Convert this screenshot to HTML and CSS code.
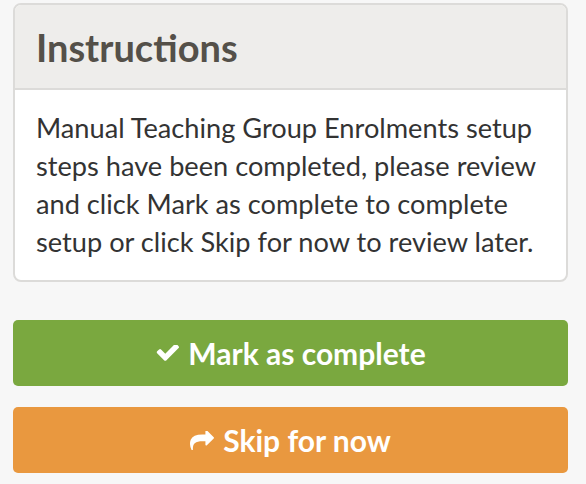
FILE: index.html
```html
<!DOCTYPE html>
<html>
<head>
<meta charset="utf-8">
<link rel="stylesheet" href="styles.css">
</head>
<body>
<div class="page">
  <div class="card">
    <div class="card-header"><h2 class="title">Instructions</h2></div>
    <div class="card-body">
      <p class="text">Manual Teaching Group Enrolments setup steps have been completed, please review and click Mark as complete to complete setup or click Skip for now to review later.</p>
    </div>
  </div>
  <div class="actions">
    <button class="btn btn-green">
      <svg class="icon icon-check" viewBox="0 420 1671 1110"><path fill="#fff" d="M1671 566q0 40-28 68l-724 724-136 136q-28 28-68 28t-68-28l-136-136-362-362q-28-28-28-68t28-68l136-136q28-28 68-28t68 28l294 295 656-657q28-28 68-28t68 28l136 136q28 28 28 68z"/></svg>
      <span>Mark as complete</span>
    </button>
    <button class="btn btn-orange">
      <svg class="icon icon-share" viewBox="0 128 1792 1420"><path fill="#fff" d="M1792 640q0 26-19 45l-512 512q-19 19-45 19t-45-19-19-45v-256h-224q-98 0-175.5 6t-154 21.5-133 42.5-105.5 69.5-80 101-48.5 138.5-17.5 181q0 55 5 123 0 6 2.5 23.5t2.5 26.5q0 15-8.5 25t-23.5 10q-16 0-28-17-7-9-13-22t-13.5-30-10.5-24q-127-285-127-451 0-199 53-333 162-403 875-403h224v-256q0-26 19-45t45-19 45 19l512 512q19 19 19 45z"/></svg>
      <span>Skip for now</span>
    </button>
  </div>
</div>
</body>
</html>
```

FILE: styles.css
```css
html, body {
  margin: 0;
  padding: 0;
  background: #f7f7f7;
}
body {
  font-family: Lato, "Noto Sans", sans-serif;
}
.page {
  width: 555px;
  padding: 3px 0 0 13px;
}
.card {
  border: 2px solid #dcdbd9;
  border-radius: 8px;
  background: #fff;
  overflow: hidden;
}
.card-header {
  background: #eeedeb;
  border-bottom: 2px solid #dcdbd9;
  height: 83px;
  display: flex;
  align-items: center;
  padding: 0 21px;
}
.title {
  margin: 0;
  font-size: 38px;
  font-weight: 700;
  color: #545049;
  line-height: 1;
}
.card-body {
  padding: 19px 21px 19px;
}
.text {
  margin: 0;
  font-size: 27.2px;
  line-height: 38px;
  color: #333;
}
.actions {
  margin-top: 38px;
  display: flex;
  flex-direction: column;
  gap: 21px;
}
.btn {
  height: 66px;
  border: none;
  border-radius: 5px;
  display: flex;
  align-items: center;
  justify-content: center;
  gap: 9px;
  color: #fff;
  font-family: Lato, "Noto Sans", sans-serif;
  font-weight: 700;
  font-size: 30px;
  padding: 0;
  width: 100%;
}
.btn-green { background: #7aa83f; }
.btn-orange { background: #e9983f; }
.icon-check { width: 24px; height: 16px; }
.icon-share { width: 24px; height: 19px; }
```
